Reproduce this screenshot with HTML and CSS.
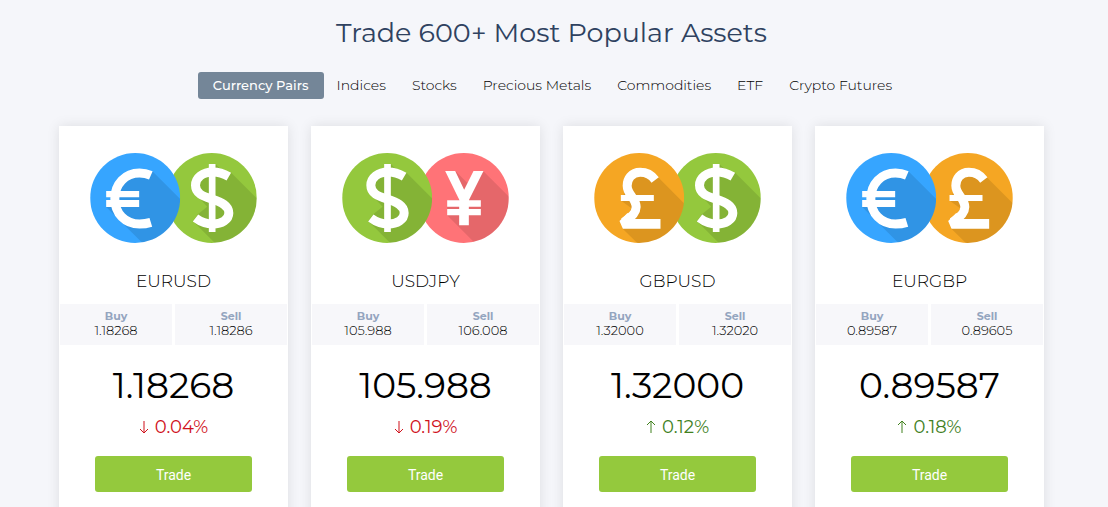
FILE: index.html
```
<!DOCTYPE html>
<html lang="en">
<head>
    <meta charset="UTF-8">
    <meta name="viewport" content="width=device-width, initial-scale=1.0">
    <title>Trade Popular Assets</title>
    <link rel="stylesheet" href="styles.css">
</head>
<body>

    <!-- Coin symbols shared by the cards -->
    <svg class="sprite" aria-hidden="true">
        <defs>
            <clipPath id="coin-clip"><circle cx="135" cy="135" r="135"/></clipPath>
        </defs>
        <symbol id="eur" viewBox="0 0 270 270">
            <circle cx="135" cy="135" r="135" fill="#36a5ff"/>
            <path clip-path="url(#coin-clip)" fill="#000" fill-opacity=".1" d="M186 54L300 168V300H187L48 162L74 137L110 70Z"/>
            <path fill="none" stroke="#fff" stroke-width="27" d="M182 67Q166 60 148 60C105 60 74 93 74 137C74 181 105 213 148 213Q166 213 182 208"/>
            <path fill="#fff" d="M48 114H147V133H48ZM48 141H147V162H48Z"/>
        </symbol>
        <symbol id="usd" viewBox="0 0 270 270">
            <circle cx="135" cy="135" r="135" fill="#94c83d"/>
            <path clip-path="url(#coin-clip)" fill="#000" fill-opacity=".1" d="M146 33L157 44L193 59L300 166V300H174L78 204L93 184L121 161L82 118L90 80L124 50Z"/>
            <path fill="none" stroke="#fff" stroke-width="27" d="M186 71Q162 57 138 57C108 57 86 74 86 97C86 122 108 129 135 138C164 148 186 158 186 180C186 200 165 213 138 213Q110 213 86 195"/>
            <path fill="#fff" d="M126 33H146V237H126Z"/>
        </symbol>
        <symbol id="gbp" viewBox="0 0 270 270">
            <circle cx="135" cy="135" r="135" fill="#f5a623"/>
            <path clip-path="url(#coin-clip)" fill="#000" fill-opacity=".1" d="M191 72L300 181V300H160L84 226L112 166L82 144L100 90L140 60Z"/>
            <path fill="none" stroke="#fff" stroke-width="27" d="M183 81Q166 58 138 58C112 58 99 78 99 98C99 125 126 135 126 162C126 180 108 196 88 208"/>
            <path fill="#fff" d="M80 126H179V144H80ZM76 204L100 180L118 198H199V227H86Z"/>
        </symbol>
        <symbol id="jpy" viewBox="0 0 270 270">
            <circle cx="135" cy="135" r="135" fill="#ff7377"/>
            <path clip-path="url(#coin-clip)" fill="#000" fill-opacity=".1" d="M193 54L300 161V300H198L85 187V142H120L110 54L145 89Z"/>
            <path fill="#fff" d="M79 54H109L136 110L164 54H194L150 142H186V161H150V168H186V187H150V217H121V187H85V168H121V161H85V142H122Z"/>
        </symbol>
    </svg>

    <section class="assets">
        <h2 class="title">Trade 600+ Most Popular Assets</h2>

        <nav class="tabs">
            <a href="#" class="active">Currency Pairs</a>
            <a href="#">Indices</a>
            <a href="#">Stocks</a>
            <a href="#">Precious Metals</a>
            <a href="#">Commodities</a>
            <a href="#">ETF</a>
            <a href="#">Crypto Futures</a>
        </nav>

        <div class="cards">
            <div class="card">
                <svg class="coins" viewBox="0 0 500 270" aria-hidden="true">
                    <use href="#usd" x="230" width="270" height="270"/>
                    <use href="#eur" width="270" height="270"/>
                </svg>
                <h3>EURUSD</h3>
                <div class="quotes">
                    <div><strong>Buy</strong><span>1.18268</span></div>
                    <div><strong>Sell</strong><span>1.18286</span></div>
                </div>
                <div class="price">1.18268</div>
                <div class="change down">
                    <svg viewBox="0 0 10 14"><path d="M5 1V13M1 9L5 13L9 9"/></svg>
                    <span>0.04%</span>
                </div>
                <button type="button">Trade</button>
            </div>

            <div class="card">
                <svg class="coins" viewBox="0 0 500 270" aria-hidden="true">
                    <use href="#jpy" x="230" width="270" height="270"/>
                    <use href="#usd" width="270" height="270"/>
                </svg>
                <h3>USDJPY</h3>
                <div class="quotes">
                    <div><strong>Buy</strong><span>105.988</span></div>
                    <div><strong>Sell</strong><span>106.008</span></div>
                </div>
                <div class="price">105.988</div>
                <div class="change down">
                    <svg viewBox="0 0 10 14"><path d="M5 1V13M1 9L5 13L9 9"/></svg>
                    <span>0.19%</span>
                </div>
                <button type="button">Trade</button>
            </div>

            <div class="card">
                <svg class="coins" viewBox="0 0 500 270" aria-hidden="true">
                    <use href="#usd" x="230" width="270" height="270"/>
                    <use href="#gbp" width="270" height="270"/>
                </svg>
                <h3>GBPUSD</h3>
                <div class="quotes">
                    <div><strong>Buy</strong><span>1.32000</span></div>
                    <div><strong>Sell</strong><span>1.32020</span></div>
                </div>
                <div class="price">1.32000</div>
                <div class="change up">
                    <svg viewBox="0 0 10 14"><path d="M5 13V1M1 5L5 1L9 5"/></svg>
                    <span>0.12%</span>
                </div>
                <button type="button">Trade</button>
            </div>

            <div class="card">
                <svg class="coins" viewBox="0 0 500 270" aria-hidden="true">
                    <use href="#gbp" x="230" width="270" height="270"/>
                    <use href="#eur" width="270" height="270"/>
                </svg>
                <h3>EURGBP</h3>
                <div class="quotes">
                    <div><strong>Buy</strong><span>0.89587</span></div>
                    <div><strong>Sell</strong><span>0.89605</span></div>
                </div>
                <div class="price">0.89587</div>
                <div class="change up">
                    <svg viewBox="0 0 10 14"><path d="M5 13V1M1 5L5 1L9 5"/></svg>
                    <span>0.18%</span>
                </div>
                <button type="button">Trade</button>
            </div>
        </div>
    </section>

</body>
</html>
```
FILE: styles.css
```
body {
    font-family: Montserrat, Inter, sans-serif;
    background-color: #f5f6fa;
    color: #000;
    margin: 0;
}

.sprite {
    position: absolute;
    width: 0;
    height: 0;
}

.assets {
    padding: 13px 64px 0 59px;
}

.title {
    margin: 0;
    font-size: 27px;
    line-height: 40px;
    font-weight: 400;
    text-align: center;
    color: #2f4260;
}

.tabs {
    display: flex;
    justify-content: center;
    gap: 26px;
    margin: 19px 0 27px;
    padding-right: 13px;
}

.tabs a {
    font-size: 14px;
    line-height: 27px;
    font-weight: 300;
    color: #000;
    text-decoration: none;
}

.tabs a.active {
    padding: 0 15px;
    margin-right: -13px;
    border-radius: 3px;
    background-color: #748698;
    color: #fff;
    font-size: 13px;
    font-weight: 500;
}

.cards {
    display: grid;
    grid-template-columns: repeat(4, 1fr);
    gap: 23px;
}

.card {
    display: flex;
    flex-direction: column;
    align-items: center;
    padding: 27px 0 36px;
    background-color: #fff;
    box-shadow: 0 0 12px rgba(0, 0, 0, 0.1);
}

.coins {
    width: 167px;
    height: 90px;
}

.card h3 {
    margin: 26px 0 11px;
    font-size: 17px;
    line-height: 24px;
    font-weight: 300;
}

.quotes {
    display: grid;
    grid-template-columns: 1fr 1fr;
    gap: 3px;
    align-self: stretch;
    margin: 0 1px;
    text-align: center;
}

.quotes div {
    display: flex;
    flex-direction: column;
    padding: 5px 0 8px;
    background-color: #f7f7fa;
    font-size: 13px;
    line-height: 14px;
    font-weight: 300;
}

.quotes strong {
    font-size: 11px;
    font-weight: 700;
    color: #94a5bf;
}

.price {
    margin-top: 20px;
    font-size: 36px;
    line-height: 40px;
    font-weight: 400;
}

.change {
    display: flex;
    align-items: center;
    gap: 6px;
    margin: 10px 0 17px;
    font-size: 18px;
    line-height: 24px;
    font-weight: 400;
}

.change svg {
    width: 10px;
    height: 14px;
    fill: none;
    stroke: currentColor;
}

.down {
    color: #d0111b;
}

.up {
    color: #41811e;
}

.card button {
    width: 157px;
    height: 36px;
    padding: 2px 0 0;
    border: none;
    border-radius: 3px;
    background-color: #94c93d;
    color: #fff;
    font-family: Roboto, sans-serif;
    font-size: 14px;
    cursor: pointer;
}

.card button:hover {
    background-color: #86b538;
}
```
